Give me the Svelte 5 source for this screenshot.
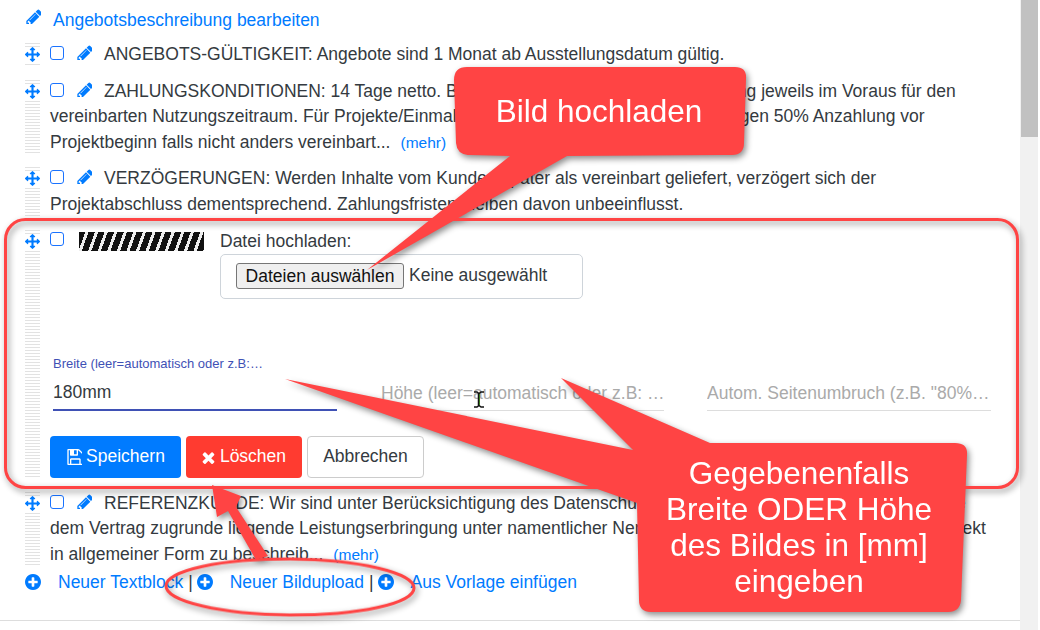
<script>
  const pencil = "M491 1536l91-91-235-235-91 91v107h128v128h107zm523-928q0-22-22-22-10 0-17 7l-542 542q-7 7-7 17 0 22 22 22 10 0 17-7l542-542q7-7 7-17zm-54-192l416 416-832 832h-416v-416zm683 96q0 53-37 90l-166 166-416-416 166-165q36-38 90-38 53 0 91 38l235 234q37 39 37 91z";
  const arrows = "M1792 896q0 26-19 45l-256 256q-19 19-45 19t-45-19-19-45v-128h-384v384h128q26 0 45 19t19 45-19 45l-256 256q-19 19-45 19t-45-19l-256-256q-19-19-19-45t19-45 45-19h128v-384h-384v128q0 26-19 45t-45 19-45-19l-256-256q-19-19-19-45t19-45l256-256q19-19 45-19t45 19 19 45v128h384v-384h-128q-26 0-45-19t-19-45 19-45l256-256q19-19 45-19t45 19l256 256q19 19 19 45t-19 45-45 19h-128v384h384v-128q0-26 19-45t45-19 45 19l256 256q19 19 19 45z";
  const plus = "M1344 960v-128q0-26-19-45t-45-19h-256v-256q0-26-19-45t-45-19h-128q-26 0-45 19t-19 45v256h-256q-26 0-45 19t-19 45v128q0 26 19 45t45 19h256v256q0 26 19 45t45 19h128q26 0 45-19t19-45v-256h256q26 0 45-19t19-45zm320-64q0 209-103 385.500t-279.500 279.500-385.500 103-385.500-103-279.500-279.500-103-385.500 103-385.500 279.500-279.500 385.500-103 385.500 103 279.500 279.500 103 385.500z";
  const floppy = "M512 1536h768v-384h-768v384zm896 0h128v-896q0-14-10-38.500t-20-34.500l-281-281q-10-10-34-20t-39-10v416q0 40-28 68t-68 28h-576q-40 0-68-28t-28-68v-416h-128v1280h128v-416q0-40 28-68t68-28h832q40 0 68 28t28 68v416zm-384-928v-320q0-13-9.500-22.500t-22.500-9.500h-192q-13 0-22.500 9.500t-9.500 22.500v320q0 13 9.500 22.500t22.500 9.500h192q13 0 22.500-9.500t9.500-22.500zm640 32v928q0 40-28 68t-68 28h-1344q-40 0-68-28t-28-68v-1344q0-40 28-68t68-28h928q40 0 88 20t76 48l280 280q28 28 48 76t20 88z";
  const times = "M1298 1322q0 40-28 68l-136 136q-28 28-68 28t-68-28l-294-294-294 294q-28 28-68 28t-68-28l-136-136q-28-28-28-68t28-68l294-294-294-294q-28-28-28-68t28-68l136-136q28-28 68-28t68 28l294 294 294-294q28-28 68-28t68 28l136 136q28 28 28 68t-28 68l-294 294 294 294q28 28 28 68z";

  const blocks = [
    { lines: ["ANGEBOTS-GÜLTIGKEIT: Angebote sind 1 Monat ab Ausstellungsdatum gültig."], more: false },
    { lines: ["ZAHLUNGSKONDITIONEN: 14 Tage netto. Bei monatlichen Mietleistungen Zahlung jeweils im Voraus für den", "vereinbarten Nutzungszeitraum. Für Projekte/Einmalleistungen Rechnungsstellung für gegen 50% Anzahlung vor", "Projektbeginn falls nicht anders vereinbart..."], more: true },
    { lines: ["VERZÖGERUNGEN: Werden Inhalte vom Kunden später als vereinbart geliefert, verzögert sich der", "Projektabschluss dementsprechend. Zahlungsfristen bleiben davon unbeeinflusst."], more: false }
  ];
  const last = { lines: ["REFERENZKUNDE: Wir sind unter Berücksichtigung des Datenschutzes berechtigt, die vereinbartes und diese", "dem Vertrag zugrunde liegende Leistungserbringung unter namentlicher Nennung des Kunden heute als Referenzprojekt", "in allgemeiner Form zu beschreib..."], more: true };
  const links = ["Neuer Textblock", "Neuer Bildupload", "Aus Vorlage einfügen"];
</script>

{#snippet icon(d, box, cls)}
  <svg class={cls} viewBox={box} aria-hidden="true"><path {d} /></svg>
{/snippet}

{#snippet block(item)}
  <div class="row">
    <div class="handle">{@render icon(arrows, "0 0 1792 1792", "move")}</div>
    <div class="body">
      {#each item.lines as line, i}
        <div class="line">
          {#if i === 0}
            <span class="check"></span>{@render icon(pencil, "0 0 1536 1536", "pen")}
          {/if}{line}{#if item.more && i === item.lines.length - 1}<a class="more" href="#top">(mehr)</a>{/if}
        </div>
      {/each}
    </div>
  </div>
{/snippet}

<div class="page">
  <main class="main">
    <div class="head">
      {@render icon(pencil, "0 0 1536 1536", "headpen")}
      <a href="#top">Angebotsbeschreibung bearbeiten</a>
    </div>

    {#each blocks as item}
      {@render block(item)}
    {/each}

    <div class="row editor">
      <div class="handle">{@render icon(arrows, "0 0 1792 1792", "move")}</div>
      <div class="body">
        <div class="top">
          <span class="check"></span>
          <div class="zebra"></div>
          <div class="upload">
            <div class="uplabel">Datei hochladen:</div>
            <div class="filebox">
              <span class="filebtn">Dateien auswählen</span>
              <span>Keine ausgewählt</span>
            </div>
          </div>
        </div>
        <div class="fields">
          <div class="field active">
            <div class="flabel">Breite (leer=automatisch oder z.B:…</div>
            <div class="fvalue">180mm</div>
          </div>
          <div class="field">
            <div class="fvalue ph">Höhe (leer=automatisch oder z.B: …</div>
          </div>
          <div class="field">
            <div class="fvalue ph">Autom. Seitenumbruch (z.B. "80%…</div>
          </div>
        </div>
        <div class="buttons">
          <button class="btn save">{@render icon(floppy, "0 128 1536 1536", "bicon")}Speichern</button>
          <button class="btn del">{@render icon(times, "110 238 1188 1316", "bicon")}Löschen</button>
          <button class="btn cancel">Abbrechen</button>
        </div>
      </div>
    </div>

    {@render block(last)}

    <div class="links">
      {#each links as label, i}
        {#if i > 0}<span class="sep">|</span>{/if}
        {@render icon(plus, "128 128 1536 1536", "plus")}
        <a href="#top">{label}</a>
      {/each}
    </div>
    <div class="rule"></div>
  </main>
  <div class="track"><div class="thumb"></div></div>

  <svg class="notes" viewBox="0 0 1040 630" aria-hidden="true">
    <g class="shadow">
      <rect class="ring" x="5.500" y="219.500" width="1012" height="268" rx="20" />
      <ellipse class="ring" cx="290" cy="587" rx="124" ry="28" transform="rotate(0.500 290 587)" />
      <path class="fill" d="M212 485 L241 496 L236 507 L268 556 L256 560 L228 511 L217 517 Z" />
      <path class="fill" d="M467 67 L735 67 Q747 67 746 79 L744 143 Q744 155 732 155 L567 156 L367 270 L510 156 L470 155 Q457 155 456 143 L454 80 Q454 67 467 67 Z" />
      <path class="fill" d="M285 379 L633 450 L561 378 L710 443 L955 443 Q968 443 967 455 L961 600 Q960 612 948 612 L651 612 Q639 612 639 600 L637 503 Z" />
    </g>
    <text class="big" x="599" y="122" text-anchor="middle">Bild hochladen</text>
    <text class="big" x="799" y="484" text-anchor="middle">Gegebenenfalls</text>
    <text class="big" x="799" y="520" text-anchor="middle">Breite ODER Höhe</text>
    <text class="big" x="799" y="556" text-anchor="middle">des Bildes in [mm]</text>
    <text class="big" x="799" y="592" text-anchor="middle">eingeben</text>
    <path class="beam" d="M474 392h3l2 1.500 2-1.500h3M478.500 393v13M474 407h3l2-1.500 2 1.500h3" />
    <path class="beamcore" d="M479.500 394v11" />
  </svg>
</div>

<style>
  :global(body) { margin: 0; background: #fff; }
  .page {
    position: relative;
    display: flex;
    width: 1040px;
    height: 630px;
    overflow: hidden;
    font: 17.5px/25.6px "Liberation Sans", Arial, sans-serif;
    color: #343a40;
  }
  .main { width: 1020px; padding: 8px 0 0 25px; box-sizing: border-box; flex: none; }
  a { color: #007bff; text-decoration: none; }
  .head { display: flex; height: 34px; }
  .headpen { width: 16px; height: 16px; fill: #007bff; margin: 0 12px 0 0; }
  .row { display: flex; margin-bottom: 11px; }
  .handle {
    width: 15px;
    flex: none;
    margin: 1px 10px 1px 0;
    background: repeating-linear-gradient(to bottom, #e2e2e2 0 1px, #fff 1px 3px);
  }
  .move { display: block; width: 15px; height: 15px; fill: #007bff; margin-top: 4px; background: #fff; }
  .body { flex: 1; min-width: 0; }
  .line { white-space: nowrap; }
  .check {
    display: inline-block;
    box-sizing: border-box;
    width: 14px;
    height: 14px;
    border: 1px solid #1a73ff;
    border-radius: 3px;
    margin-right: 12px;
    vertical-align: 0;
  }
  .pen { width: 16px; height: 16px; fill: #007bff; margin-right: 12px; vertical-align: 0; }
  .more { margin-left: 10px; font-size: 15.5px; }
  .editor { height: 251px; margin-bottom: 11px; }
  .top { display: flex; height: 112px; }
  .top .check { margin: 3px 15px 0 0; flex: none; }
  .zebra {
    width: 125px;
    height: 19px;
    margin: 3px 16px 0 0;
    flex: none;
    background: repeating-linear-gradient(110deg, #111 0 6px, #eee 6px 9px);
  }
  .uplabel { height: 25px; line-height: 25.6px; }
  .filebox {
    display: flex;
    align-items: center;
    gap: 5px;
    box-sizing: border-box;
    width: 363px;
    height: 45px;
    padding-left: 15px;
    border: 1px solid #ced4da;
    border-radius: 5px;
  }
  .filebtn {
    box-sizing: border-box;
    width: 168px;
    height: 26px;
    line-height: 24px;
    text-align: center;
    background: #efefef;
    border: 1px solid #767676;
    border-radius: 3px;
    color: #111;
  }
  .fields { display: grid; grid-template-columns: 284px 284px 284px; column-gap: 43px; margin: 12px 0 0 3px; height: 58px; align-items: end; }
  .field { border-bottom: 1px solid #ddd; height: 58px; display: flex; flex-direction: column; justify-content: flex-end; box-sizing: border-box; white-space: nowrap; overflow: hidden; }
  .field:nth-child(2) { margin-left: 1px; }
  .field.active { border-bottom: 2px solid #3f51b5; }
  .flabel { font-size: 13px; line-height: 14px; color: #3f51b5; margin-bottom: 8px; }
  .fvalue { line-height: 26px; height: 30px; color: #343a40; }
  .fvalue.ph { color: #aaa; }
  .buttons { display: flex; gap: 5px; margin-top: 25px; }
  .btn {
    box-sizing: border-box;
    display: flex;
    align-items: center;
    justify-content: center;
    height: 42px;
    border: 1px solid transparent;
    border-radius: 4px;
    font: inherit;
    padding: 1px 0 0;
    color: #fff;
  }
  .save { width: 131px; background: #007bff; }
  .del { width: 116px; background: #ff3b30; }
  .cancel { width: 117px; background: #fff; border-color: #ccc; color: #343a40; }
  .bicon { width: 16px; height: 16px; fill: #fff; margin-right: 4px; }
  .del .bicon { width: 13px; height: 13px; margin-right: 5px; }
  .links { display: flex; align-items: center; height: 26px; white-space: nowrap; margin-top: -9px; }
  .plus { width: 16px; height: 16px; fill: #007bff; margin-right: 17px; flex: none; }
  .sep { margin: 0 4px 0 5px; }
  .rule { height: 1px; background: #ddd; margin: 25px 0 0 -25px; }
  .track { width: 18px; flex: none; background: #f1f1f1; }
  .thumb { width: 17px; height: 137px; margin-left: 1px; background: #c1c1c1; }
  .notes { position: absolute; inset: 0; width: 1040px; height: 630px; }
  .shadow { filter: drop-shadow(2px 3px 3px rgba(0, 0, 0, 0.45)); }
  .ring { fill: none; stroke: #ff4444; stroke-width: 3; }
  .fill { fill: #ff4444; }
  .big { fill: #fff; font: 31.500px "Liberation Sans", Arial, sans-serif; }
  .beam { fill: none; stroke: #111; stroke-width: 1.500; }
  .beamcore { fill: none; stroke: #3a7a1e; stroke-width: 1; }
</style>
